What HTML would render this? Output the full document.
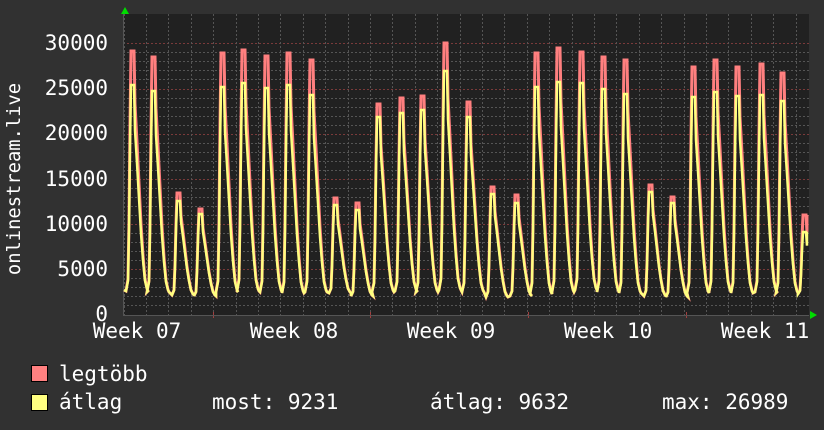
<!DOCTYPE html>
<html><head><meta charset="utf-8"><style>
html,body{margin:0;padding:0;background:#313131;width:824px;height:430px;overflow:hidden}
svg{display:block}
text{font-family:"DejaVu Sans Mono","Liberation Mono",monospace;fill:#fff;font-size:21px}
</style></head><body>
<svg id="s" width="824" height="430" xmlns="http://www.w3.org/2000/svg">
<rect x="0" y="0" width="824" height="430" fill="#313131"/>
<rect x="123" y="14" width="686" height="301" fill="#212121"/>
<g id="grid"></g>
<g id="data"></g>
<polygon points="121,14 129,14 125,7" fill="#00dd00"/>
<polygon points="810,311 810,319 817,315" fill="#00dd00"/>
<g text-anchor="end">
<text x="108" y="50">30000</text>
<text x="108" y="95">25000</text>
<text x="108" y="140">20000</text>
<text x="108" y="186">15000</text>
<text x="108" y="231">10000</text>
<text x="108" y="276">5000</text>
<text x="108" y="321">0</text>
</g>
<text x="20" y="179" transform="rotate(-90 20 179)" text-anchor="middle" style="font-size:18.8px">onlinestream.live</text>
<g text-anchor="middle">
<text x="137" y="338">Week 07</text>
<text x="294" y="338">Week 08</text>
<text x="451" y="338">Week 09</text>
<text x="608" y="338">Week 10</text>
<text x="765" y="338">Week 11</text>
</g>
<rect x="31.5" y="365.5" width="16" height="16" fill="#ff8080" stroke="#000"/>
<rect x="31.5" y="394.5" width="16" height="16" fill="#ffff80" stroke="#000"/>
<text x="59" y="381">legtöbb</text>
<text x="59" y="409">átlag</text>
<text x="212" y="409">most: 9231</text>
<text x="430" y="409">átlag: 9632</text>
<text x="662" y="409">max: 26989</text>
</svg>
<script>
var NS="http://www.w3.org/2000/svg";
var g=document.getElementById('grid'),d=document.getElementById('data');
function L(p,x1,y1,x2,y2,c,da){var l=document.createElementNS(NS,'line');l.setAttribute('x1',x1);l.setAttribute('y1',y1);l.setAttribute('x2',x2);l.setAttribute('y2',y2);l.setAttribute('stroke',c);l.setAttribute('stroke-width',1);if(da)l.setAttribute('stroke-dasharray',da);p.appendChild(l);}
for(var i=1;i<=30;i++){var y=314.5-i*9.04;y=Math.round(y)+0.5;L(g,123,y,809,y,i%5==0?'#7a3a3a':'#555','2,2');}
for(var k=0;k<31;k++){var x=Math.round(123.6+22.4*k)+0.5;L(g,x,14,x,315,'#555','2,2');}
[213,370,528,686].forEach(function(x){L(g,x+.5,312,x+.5,318,'#a04040');});
L(g,123,315.5,809,315.5,'#555');L(g,123.5,14,123.5,315,'#555');
var P=[[133,51,85],[154,57,91],[179,193,201],[201,209,214],[223,53,87],[244,50,83],[267,56,88],[289,53,85],[312,60,95],[336,198,205],[358,203,210],[379,104,117],[402,98,113],[423,96,110],[446,43,71],[469,102,117],[493,187,194],[517,195,203],[537,53,87],[559,48,82],[582,52,83],[604,57,89],[626,60,94],[651,185,192],[673,197,203],[694,67,97],[716,60,92],[738,67,96],[762,64,95],[783,73,101],[805,215,232]];
var prof=[[-7,0],[-5,0.05],[-4,0.3],[-3,0.7],[-2,1],[1,1],[2,0.78],[4,0.62],[6,0.45],[8,0.28],[10,0.15],[12,0.05],[14,0.01],[15,0]];
var T=[291,292,295,296,292,291,292,293,292,293,296,292,291,292,290,292,297,296,294,292,290,292,293,296,297,293,292,293,292,293,294];
function build(idx){var pts=['124,290'];for(var j=0;j<P.length;j++){var px=P[j][0],top=P[j][idx],tr=T[j];for(var m=0;m<prof.length;m++){var x=px+prof[m][0];if(x>807)continue;if(x<125)continue;var y=tr-(tr-top)*prof[m][1];pts.push(x+','+y.toFixed(1));}}
if(idx==1)pts.push('807,'+215);else pts.push('807,232');return pts.join(' ');}
function poly(pts,c,w){var p=document.createElementNS(NS,'polyline');p.setAttribute('points',pts);p.setAttribute('fill','none');p.setAttribute('stroke',c);p.setAttribute('stroke-width',w);p.setAttribute('stroke-linejoin','miter');d.appendChild(p);}
poly(build(1),'#ff7f7f',3);poly(build(2),'#ffff80',2.5);
</script>
</body></html>
